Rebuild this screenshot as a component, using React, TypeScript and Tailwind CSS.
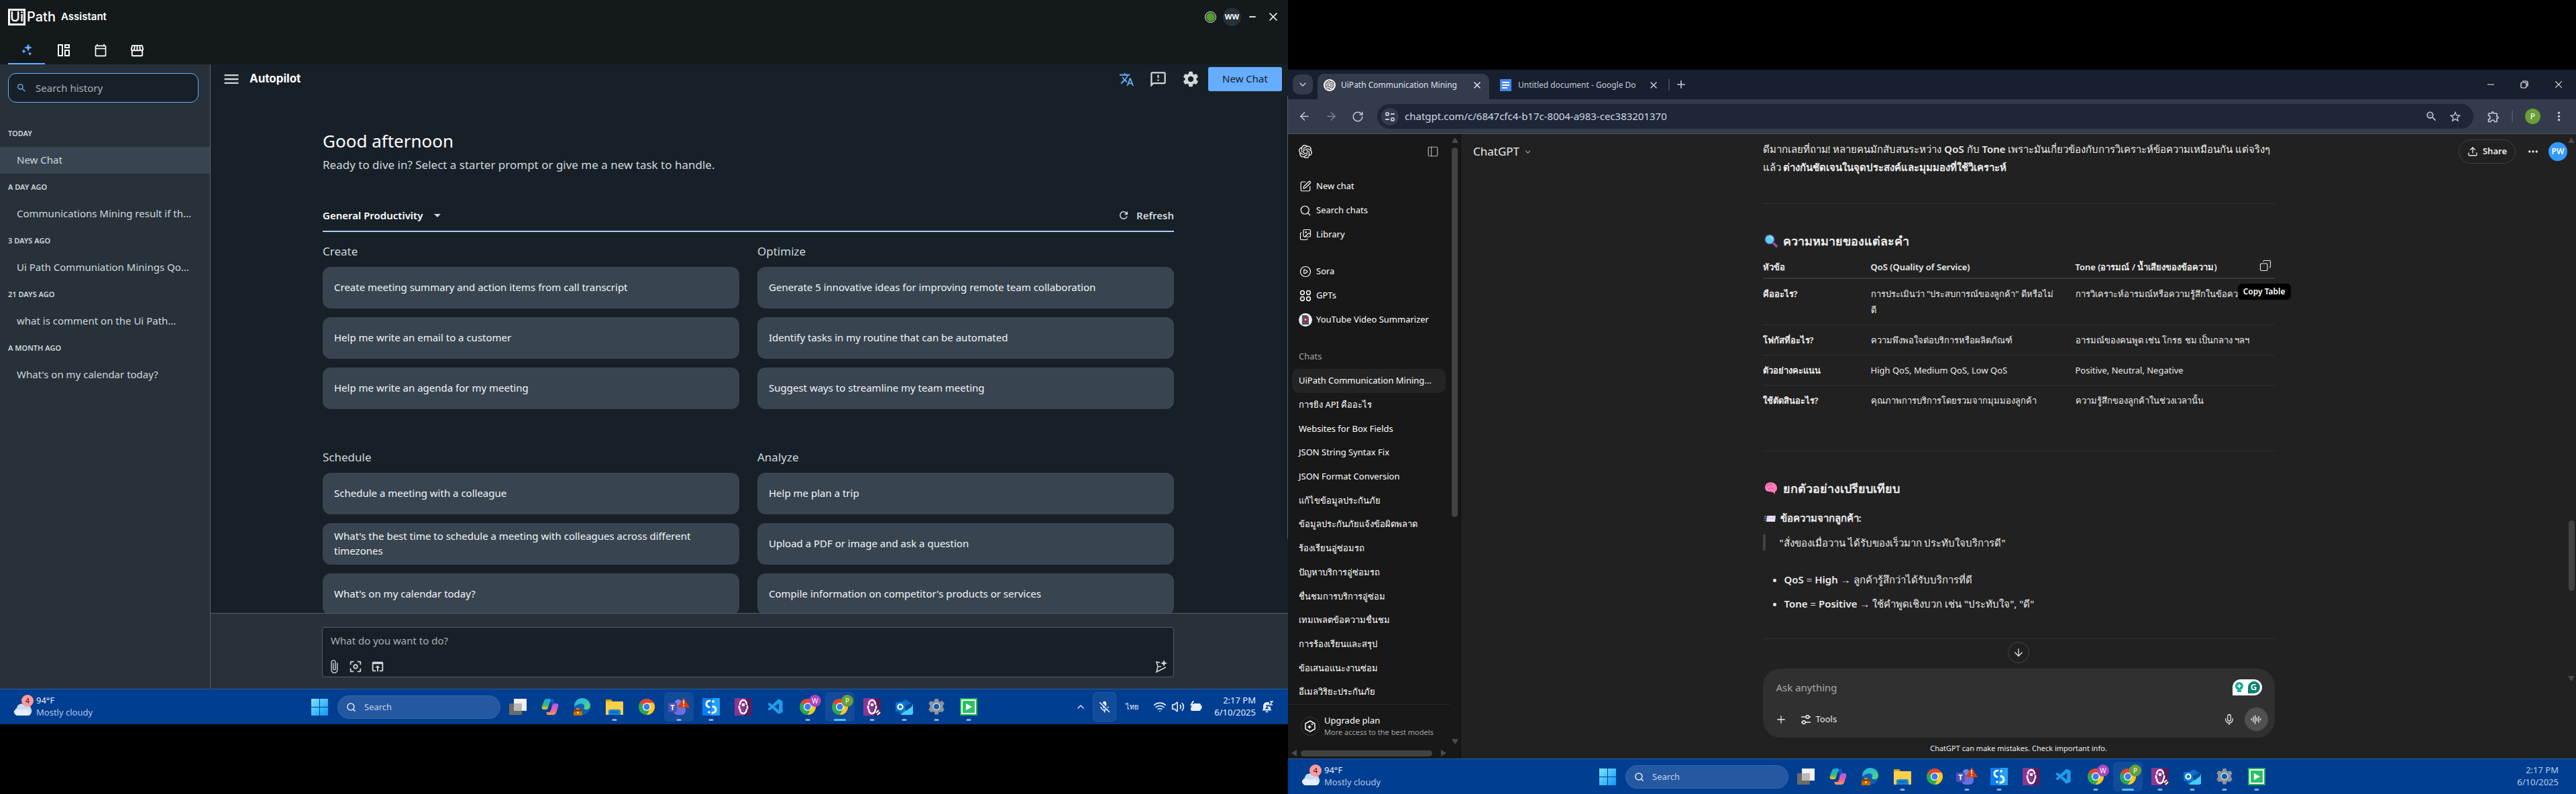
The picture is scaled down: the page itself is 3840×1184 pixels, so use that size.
import React from "react";
import {
  MdMenu, MdTranslate, MdOutlineFeedback, MdSettings, MdRefresh, MdSearch, MdAttachFile, MdMicOff,
  MdCenterFocusWeak, MdOpenInBrowser, MdOutlineCalendarToday, MdOutlineStorefront,
  MdArrowDropDown, MdStarBorder, MdOutlineExtension, MdMoreVert, MdZoomOut,
} from "react-icons/md";
import { SiOpenai } from "react-icons/si";
import { VscVscode } from "react-icons/vsc";
import {
  ArrowDown, ArrowLeft, ArrowRight, ChevronDown, ChevronUp, RotateCw, X, Plus, Minus, Mic,
  Search, SquarePen, Images, CirclePlay, PanelLeft, Ellipsis, Copy, Upload, Wifi, Volume2,
  AudioLines,
} from "lucide-react";

type Kids = { children?: React.ReactNode };

/* ---------- Shared drawings ---------- */

function Sparkles() {
  return (
    <svg viewBox="0 0 20 20" className="size-5" fill="currentColor" aria-hidden="true">
      <path d="M12 1l1.600 4.200L18 7l-4.400 1.800L12 13l-1.600-4.200L6 7l4.400-1.800z" />
      <path d="M5.500 9l1.100 2.400L9 12.500l-2.400 1.100L5.500 16l-1.100-2.400L2 12.500l2.400-1.100z" />
      <path d="M14.500 13l.9 2.100 2.100.9-2.100.9-.9 2.100-.9-2.100-2.100-.9 2.100-.9z" />
    </svg>
  );
}

function BoardIcon() {
  return (
    <svg viewBox="0 0 20 20" className="size-5" fill="none" stroke="currentColor" strokeWidth="2" aria-hidden="true">
      <path d="M2 2h6v16H2zM12 2h6v4h-6zM12 10h6v8h-6z" />
    </svg>
  );
}

function SendSpark() {
  return (
    <svg viewBox="0 0 20 20" className="size-5" fill="none" stroke="currentColor" strokeWidth="1.6" aria-hidden="true">
      <path d="M8 4L3 3l2 7-2 8 14-7M5 10h5" />
      <path d="M14 0l1.400 3.600L19 5l-3.600 1.400L14 10l-1.400-3.600L9 5l3.600-1.400z" fill="currentColor" stroke="none" />
    </svg>
  );
}

function BatteryIcon() {
  return (
    <svg viewBox="0 0 20 18" className="h-[18px] w-5" fill="currentColor" aria-hidden="true">
      <path d="M7 4h8a2 2 0 0 1 2 2v1h1.500v5H17v1a2 2 0 0 1-2 2H4a2 2 0 0 1-2-2v-2z" />
      <path d="M5 0L1 7h2.500L2 11l5-6H4.500L7 1z" />
    </svg>
  );
}

function BellIcon() {
  return (
    <svg viewBox="0 0 17 18" className="h-[18px] w-[17px]" fill="currentColor" aria-hidden="true">
      <path d="M8 2c-4 0-6 3-6 6v4l-1.500 2.500h14L13 12V9h-2V2.600C10 2 9 2 8 2zM5.500 15.500h4a2 2 0 0 1-4 0z" />
      <path d="M12 1h4l-4 5h4" fill="none" stroke="currentColor" strokeWidth="1.400" />
      <path d="M6 7h4l-4 4.500h4" fill="none" stroke="#003e92" strokeWidth="1.400" />
    </svg>
  );
}

function Chrome() {
  return (
    <svg viewBox="0 0 26 26" className="size-[26px]" aria-hidden="true">
      <circle cx="13" cy="13" r="12" fill="#2da84f" />
      <path d="M13 13L2.600 7A12 12 0 0 1 23.400 7z" fill="#e8432f" />
      <path d="M13 7h10.400A12 12 0 0 1 13 25l5.200-9z" fill="#fdc81f" />
      <circle cx="13" cy="13" r="6" fill="#fff" />
      <circle cx="13" cy="13" r="4.700" fill="#3b7ded" />
    </svg>
  );
}

function TaskView() {
  return (
    <svg viewBox="0 0 26 26" className="size-[26px]" aria-hidden="true">
      <rect x="7" y="1" width="19" height="18" fill="#f2f2f2" />
      <rect x="0" y="8" width="19" height="17" fill="#6b6b6b" />
      <rect x="7" y="8" width="12" height="11" fill="#b9b9b9" />
    </svg>
  );
}

function Copilot() {
  return (
    <svg viewBox="0 0 26 26" className="size-[26px]" aria-hidden="true">
      <defs>
        <linearGradient id="cpA" x1="0" y1="0" x2="0" y2="1">
          <stop offset="0" stopColor="#12a8f0" /><stop offset=".6" stopColor="#3fb86a" /><stop offset="1" stopColor="#f6c82a" />
        </linearGradient>
        <linearGradient id="cpB" x1="0" y1="0" x2="0" y2="1">
          <stop offset="0" stopColor="#a15cf5" /><stop offset=".6" stopColor="#f0609a" /><stop offset="1" stopColor="#fb9a55" />
        </linearGradient>
      </defs>
      <path d="M8 1h8c2 0 2 2 3 4h-4c-2 0-3 2-4 6s-2 6-4 6H4c-3 0-4-2-3-5l3-8c1-2 2-3 4-3z" fill="url(#cpA)" />
      <path d="M18 25h-8c-2 0-2-2-3-4h4c2 0 3-2 4-6s2-7 4-7h3c3 0 4 2 3 5l-3 9c-1 2-2 3-4 3z" fill="url(#cpB)" />
      <path d="M13 1h3c2 0 2 2 3 4l1 3c-3 0-4 1-5 4l-1 2 1-8z" fill="#2048c8" />
    </svg>
  );
}

function Edge() {
  return (
    <svg viewBox="0 0 26 26" className="size-[26px]" aria-hidden="true">
      <defs>
        <linearGradient id="edG" x1="0" y1="0" x2="1" y2="1">
          <stop offset="0" stopColor="#2aa7ea" /><stop offset=".6" stopColor="#35c8b8" /><stop offset="1" stopColor="#6be052" />
        </linearGradient>
      </defs>
      <circle cx="13" cy="13" r="12" fill="#0f5fb4" />
      <path d="M1 13A12 12 0 0 1 25 11c0 4-3 6-6 6-3 0-5-1-3-4 1-4-4-6-8-4-3 1-6 2-7 4z" fill="url(#edG)" />
      <rect x="0" y="17" width="13" height="9" fill="#c56b00" />
      <rect x="0" y="17" width="13" height="3" fill="#8a4300" />
      <rect x="4" y="15" width="5" height="2" fill="#e08a1a" />
      <rect x="5" y="20" width="3" height="3" fill="#ffd23f" />
    </svg>
  );
}

function Folder() {
  return (
    <svg viewBox="0 0 26 26" className="size-[26px]" aria-hidden="true">
      <path d="M0 2h8l2 3h-3v3H0z" fill="#e0a000" />
      <rect x="0" y="5" width="26" height="20" rx="1" fill="#ffcf48" />
      <path d="M4 25v-5c0-2 1-3 3-3h12c2 0 3 1 3 3v5z" fill="#1583d6" />
      <rect x="8" y="20" width="10" height="2" fill="#0a62ad" />
    </svg>
  );
}

function Teams() {
  return (
    <svg viewBox="0 0 32 28" className="h-7 w-8" aria-hidden="true">
      <circle cx="15" cy="8" r="5" fill="#7b83eb" />
      <rect x="8" y="11" width="18" height="15" rx="6" fill="#6a6fdc" />
      <rect x="0" y="8" width="13" height="14" rx="1" fill="#4a51b8" />
      <text x="6.500" y="19" textAnchor="middle" fontSize="11" fontWeight="700" fill="#fff" fontFamily="Noto Sans, sans-serif">T</text>
      <path d="M23 0l9 15H14z" fill="#dc3c0c" />
      <path d="M23 4v6M23 11.500v2" stroke="#fff" strokeWidth="1.600" />
    </svg>
  );
}

function BlueS() {
  return (
    <svg viewBox="0 0 26 26" className="size-[26px]" aria-hidden="true">
      <rect width="26" height="26" fill="#0a7df0" />
      <path d="M15 0h11v26H12z" fill="#25a0f8" />
      <path d="M11 4c-3 0-5 2-5 4.500S8 13 10 13.500M15 22c3 0 5-2 5-4.500s-2-4.500-4-5" fill="none" stroke="#fff" strokeWidth="3" strokeLinecap="round" />
      <circle cx="16" cy="5" r="1.800" fill="#fff" /><circle cx="10" cy="21" r="1.800" fill="#fff" />
    </svg>
  );
}

function PurpleBot({ link = false }: { link?: boolean }) {
  return (
    <svg viewBox="0 0 26 26" className="size-[26px]" aria-hidden="true">
      <rect width="26" height="26" fill="#8e3590" />
      <path d="M17 0h9v26H15z" fill="#54205e" />
      <path d="M8 10c0-4 2-7 5-7s5 3 5 7M8 16c0 4 2 7 5 7s5-3 5-7M7 11v5M19 11v5" fill="none" stroke="#fff" strokeWidth="2.600" />
      <rect x="11" y="8" width="4" height="4" fill="#fff" />
      {link && <path d="M19 22l4-4M21 25l4-4" stroke="#fff" strokeWidth="2" />}
    </svg>
  );
}

function Outlook() {
  return (
    <svg viewBox="0 0 26 26" className="size-[26px]" aria-hidden="true">
      <path d="M4 9L15 2l11 7v15H6z" fill="#1368c4" />
      <path d="M8 24L26 10v12c0 2-1 3-3 3H9z" fill="#45cdf6" />
      <path d="M14 12l11-5v5l-9 7z" fill="#0a4a9c" />
      <rect x="0" y="6" width="14" height="14" rx="2" fill="#0c78d4" />
      <circle cx="7" cy="13" r="3.600" fill="none" stroke="#fff" strokeWidth="2.200" />
    </svg>
  );
}

function GearApp() {
  return (
    <svg viewBox="0 0 26 26" className="size-[26px]" aria-hidden="true">
      <path d="M10.500 1h5l.8 3.400 2 1 3.200-1.500 3.300 4-2 2.900v3.400l2 2.800-3.300 4.200-3.200-1.300-2 1-.8 3.600h-5l-.8-3.600-2-1-3.200 1.300L1.200 17l2-2.800v-3.400l-2-2.900 3.300-4 3.200 1.500 2-1z" fill="#8d949b" />
      <circle cx="13" cy="12.800" r="6" fill="#1d5c9e" />
      <circle cx="13" cy="12.800" r="5" fill="none" stroke="#e4eef6" strokeWidth="1.400" />
    </svg>
  );
}

function GreenPlay() {
  return (
    <svg viewBox="0 0 26 26" className="size-[26px]" aria-hidden="true">
      <rect width="26" height="26" fill="#1fb554" />
      <rect x="3" y="3" width="20" height="20" fill="#2bc263" stroke="#fff" strokeWidth="2" />
      <path d="M9 8l9 5-9 5z" fill="#fff" />
    </svg>
  );
}

function WinLogo() {
  return (
    <svg viewBox="0 0 25 25" className="size-[25px]" aria-hidden="true">
      <defs>
        <linearGradient id="wl" x1="0" y1="0" x2="1" y2="1">
          <stop offset="0" stopColor="#7fe6fd" /><stop offset="1" stopColor="#0e96f5" />
        </linearGradient>
      </defs>
      <path d="M0 0h12v12H0zM13 0h12v12H13zM0 13h12v12H0zM13 13h12v12H13z" fill="url(#wl)" />
    </svg>
  );
}

function Weather() {
  return (
    <svg viewBox="0 0 32 34" className="h-[34px] w-8" aria-hidden="true">
      <circle cx="20" cy="19" r="6" fill="#f08a24" />
      <path d="M6 31a6 6 0 0 1-1-11 7 7 0 0 1 13-3 6 6 0 0 1 4 14z" fill="#c6dcf8" />
      <path d="M6 31a6 6 0 0 1-5-7 8 5 0 0 1 12-1c4-2 11-1 13 3a5 5 0 0 1-4 5z" fill="#e6effb" />
      <circle cx="21" cy="9" r="9" fill="#ff9a9f" />
      <text x="21" y="13" textAnchor="middle" fontSize="11" fill="#2b1515" fontFamily="Noto Sans, sans-serif">4</text>
    </svg>
  );
}

/* ---------- Taskbar ---------- */

function AppSlot({ children, dot, active, name, badge, badgeClass }: Kids & {
  dot?: boolean; active?: boolean; name: string; badge?: string; badgeClass?: string;
}) {
  return (
    <button aria-label={name} className="relative flex h-11 w-12 items-center justify-center">
      {active && <span className="absolute inset-x-[2px] inset-y-0 rounded-md bg-[#124b9a]" />}
      <span className="relative">{children}</span>
      {badge && (
        <span className={`absolute top-1 right-1 flex size-[18px] items-center justify-center rounded-full text-[10px] text-white ${badgeClass}`}>{badge}</span>
      )}
      {dot && <span className={`absolute bottom-[1px] left-1/2 h-[3px] -translate-x-1/2 rounded-full ${active && badge ? "w-[18px] bg-[#4cc2ff]" : "w-[7px] bg-[#8fabd6]"}`} />}
    </button>
  );
}

function Taskbar({ primary }: { primary?: boolean }) {
  return (
    <footer className={`grid h-[53px] shrink-0 grid-cols-[1fr_auto_1fr] items-center border-t border-[#2b5c97] bg-[#003e92] text-[13px] leading-[18px] ${primary ? "text-[#e8eff8]" : "text-[#bccde6]"}`}>
      <div className="flex items-center gap-[2px] pb-[2px] pl-5">
        <Weather />
        <div>
          <p className="text-[#eef3fa]">94°F</p>
          <p className="text-[#b4c6e2]">Mostly cloudy</p>
        </div>
      </div>
      <div className="flex items-center">
        <button aria-label="Start" className="flex h-11 w-12 items-center justify-center"><WinLogo /></button>
        <label className="mr-[2px] ml-[3px] flex h-[35px] w-[243px] items-center gap-3 rounded-full border border-[#3767ab] bg-[#2458a0] pl-3">
          <Search className="size-[17px] text-[#dfe8f4]" strokeWidth={2.4} />
          <input placeholder="Search" aria-label="Search Windows" className="w-full bg-transparent text-[13px] outline-none placeholder:text-[#c3d2ea]" />
        </label>
        <AppSlot name="Task View"><TaskView /></AppSlot>
        <AppSlot name="Copilot"><Copilot /></AppSlot>
        <AppSlot name="Edge"><Edge /></AppSlot>
        <AppSlot name="File Explorer" dot><Folder /></AppSlot>
        <AppSlot name="Chrome"><Chrome /></AppSlot>
        <AppSlot name="Teams" dot active={primary}><Teams /></AppSlot>
        <AppSlot name="Assistant" dot><BlueS /></AppSlot>
        <AppSlot name="Orchestrator"><PurpleBot /></AppSlot>
        <AppSlot name="Visual Studio Code"><VscVscode className="size-[27px] text-[#1f9cea]" /></AppSlot>
        <AppSlot name="Chrome, profile W" dot badge="W" badgeClass="bg-[#ab47bc]"><Chrome /></AppSlot>
        <AppSlot name="Chrome, profile P" dot active badge="P" badgeClass="bg-[#689f38]"><Chrome /></AppSlot>
        <AppSlot name="Studio" dot><PurpleBot link /></AppSlot>
        <AppSlot name="Outlook" dot><Outlook /></AppSlot>
        <AppSlot name="Settings" dot><GearApp /></AppSlot>
        <AppSlot name="Recorder" dot><GreenPlay /></AppSlot>
      </div>
      {primary ? (
        <div className="flex items-center justify-end pr-[22px]">
          <ChevronUp className="mr-[10px] size-4" />
          <span className="mr-[14px] flex h-11 w-[35px] items-center justify-center rounded-md border border-[#2458a0] bg-[#124b9a]"><MdMicOff className="size-[21px]" /></span>
          <span className="mr-[21px] w-5 text-[11px]">ไทย</span>
          <Wifi className="mr-[7px] size-5" />
          <Volume2 className="mr-[7px] size-5" />
          <span className="mr-[17px]"><BatteryIcon /></span>
          <div className="pb-[2px] text-right"><p>2:17 PM</p><p>6/10/2025</p></div>
          <span className="ml-[9px]"><BellIcon /></span>
        </div>
      ) : (
        <div className="pr-[26px] pb-[2px] text-right"><p>2:17 PM</p><p>6/10/2025</p></div>
      )}
    </footer>
  );
}

/* ---------- UiPath Assistant ---------- */

const history: [string, string][] = [
  ["TODAY", "New Chat"],
  ["A DAY AGO", "Communications Mining result if th..."],
  ["3 DAYS AGO", "Ui Path Communiation Minings Qo..."],
  ["21 DAYS AGO", "what is comment on the Ui Path..."],
  ["A MONTH AGO", "What's on my calendar today?"],
];

const prompts: [string, string[]][] = [
  ["Create", ["Create meeting summary and action items from call transcript", "Help me write an email to a customer", "Help me write an agenda for my meeting"]],
  ["Optimize", ["Generate 5 innovative ideas for improving remote team collaboration", "Identify tasks in my routine that can be automated", "Suggest ways to streamline my team meeting"]],
  ["Schedule", ["Schedule a meeting with a colleague", "What's the best time to schedule a meeting with colleagues across different timezones", "What's on my calendar today?"]],
  ["Analyze", ["Help me plan a trip", "Upload a PDF or image and ask a question", "Compile information on competitor's products or services"]],
];

function Assistant() {
  return (
    <section className="mb-26 flex min-w-0 flex-1 flex-col overflow-hidden bg-[#182027] text-[15px] text-[#cfd8dd]">
      <header className="flex h-24 shrink-0 flex-col justify-between bg-[#14191c] text-white">
        <div className="flex h-[50px] items-center pr-3 pl-3 font-['Inter']">
          <span className="flex items-center text-[20px] leading-none">
            <span className="flex h-[25px] w-[26px] items-center justify-center border-[3px] border-white font-medium">Ui</span>
            <span className="ml-[2px] font-medium">Path</span>
          </span>
          <span className="ml-2 text-[15px] font-semibold">Assistant</span>
          <span className="ml-auto flex items-center">
            <span className="mr-[10px] flex size-[17px] items-center justify-center rounded-full border border-white"><span className="size-[13px] rounded-full bg-[#4f9e2c]" /></span>
            <span className="mr-[10px] flex size-[27px] items-center justify-center rounded-full bg-[#273139] font-['Noto_Sans'] text-[11px] font-bold">WW</span>
            <button aria-label="Minimize" className="mr-[14px]"><Minus className="size-[14px]" strokeWidth={3} /></button>
            <button aria-label="Close"><X className="size-5" /></button>
          </span>
        </div>
        <nav className="flex h-[42px] pl-3">
          <button aria-label="Autopilot" className="flex w-[55px] items-center justify-center border-b-2 border-[#66adff] text-[#66adff]"><Sparkles /></button>
          <button aria-label="Home" className="flex w-[55px] items-center justify-center"><BoardIcon /></button>
          <button aria-label="Calendar" className="flex w-[55px] items-center justify-center"><MdOutlineCalendarToday className="size-5" /></button>
          <button aria-label="Marketplace" className="flex w-[55px] items-center justify-center"><MdOutlineStorefront className="size-[23px]" /></button>
        </nav>
      </header>

      <div className="flex min-h-0 flex-1">
        <aside className="w-[314px] shrink-0 border-r border-[#526069] bg-[#273139]">
          <label className="mt-[13px] mr-[17px] ml-3 flex h-11 items-center gap-[13px] rounded-xl border border-[#66adff] bg-[#182027] pl-[11px]">
            <MdSearch className="size-[18px] text-[#66adff]" />
            <input placeholder="Search history" aria-label="Search history" className="w-full bg-transparent outline-none placeholder:text-[#a4b1b8]" />
          </label>
          <ul className="mt-[26px]">
            {history.map(([when, title], i) => (
              <li key={when}>
                <h3 className="flex h-10 items-center pl-3 text-[11px] font-semibold">{when}</h3>
                <a href="#chat" className={`flex h-10 items-center pb-[2px] pl-[25px] whitespace-nowrap ${i === 0 ? "bg-[#384551]" : ""}`}>{title}</a>
              </li>
            ))}
          </ul>
        </aside>

        <main className="relative flex min-w-0 flex-1 flex-col">
          <div className="flex h-11 shrink-0 items-center pr-[9px] pl-[17px]">
            <button aria-label="Menu"><MdMenu className="size-7 text-[#cfd8dd]" /></button>
            <h1 className="ml-[13px] font-['Inter'] text-[17px] font-bold text-white">Autopilot</h1>
            <div className="ml-auto flex items-center">
              <button aria-label="Translate" className="mr-[22px]"><MdTranslate className="size-[23px] text-[#66adff]" /></button>
              <button aria-label="Feedback" className="mr-[21px]"><MdOutlineFeedback className="size-[27px]" /></button>
              <button aria-label="Settings" className="mr-3"><MdSettings className="size-7" /></button>
              <button className="h-9 w-[110px] rounded-[3px] bg-[#66adff] pb-[2px] text-[15px] text-[#182027]">New Chat</button>
            </div>
          </div>

          <div className="min-h-0 flex-1 overflow-hidden pr-[170px] pl-[167px]">
            <h2 className="mt-[52px] text-[26px] leading-9 text-white">Good afternoon</h2>
            <p className="mt-1 text-[17px] leading-7">Ready to dive in? Select a starter prompt or give me a new task to handle.</p>
            <div className="mt-10 flex h-[46px] items-center justify-between border-b-2 border-[#a9d0fb] pb-[2px]">
              <button className="flex items-center gap-[10px] font-semibold text-white">General Productivity <MdArrowDropDown className="size-6 text-[#cfd8dd]" /></button>
              <button className="flex items-center gap-[10px] font-semibold"><MdRefresh className="size-[18px]" />Refresh</button>
            </div>
            <div className="mt-[15px] grid grid-cols-2 gap-x-[27px] gap-y-[58px]">
              {prompts.map(([group, items]) => (
                <section key={group}>
                  <h3 className="text-[17px] leading-7">{group}</h3>
                  <div className="mt-[9px] flex flex-col gap-[13px]">
                    {items.map((t) => (
                      <button key={t} className="h-[62px] rounded-xl bg-[#384551] px-[17px] pb-[2px] text-left text-[15px] leading-[22px] text-[#f4f6f7]">{t}</button>
                    ))}
                  </div>
                </section>
              ))}
            </div>
          </div>

          <div className="shrink-0 border-t border-[#526069] bg-[#273139] pt-5 pr-[170px] pb-[17px] pl-[166px]">
            <div className="flex h-[75px] flex-col justify-between rounded border border-[#526069] bg-[#182027] px-[6px] pt-2 pb-1">
              <input placeholder="What do you want to do?" aria-label="Prompt" className="bg-transparent pl-[6px] outline-none placeholder:text-[#a4b1b8]" />
              <div className="flex items-center">
                <button aria-label="Attach" className="mr-[10px]"><MdAttachFile className="size-[22px]" /></button>
                <button aria-label="Capture" className="mr-[11px]"><MdCenterFocusWeak className="size-[22px]" /></button>
                <button aria-label="Open"><MdOpenInBrowser className="size-[22px]" /></button>
                <button aria-label="Send" className="mr-[2px] ml-auto"><SendSpark /></button>
              </div>
            </div>
          </div>
          <span className="absolute top-[47px] right-0 h-[71%] w-px bg-[#526069]" />
        </main>
      </div>
      <Taskbar primary />
    </section>
  );
}

/* ---------- Browser with ChatGPT ---------- */

function Tri({ dir }: { dir: "up" | "down" | "left" | "right" }) {
  const d = { up: "M5 1l5 8H0z", down: "M5 9L0 1h10z", left: "M1 5l8-5v10z", right: "M9 5L1 0v10z" }[dir];
  return <svg viewBox="0 0 10 10" className="size-[10px] shrink-0 text-[#4b4b4b]" fill="currentColor" aria-hidden="true"><path d={d} /></svg>;
}

function GptsIcon() {
  return (
    <svg viewBox="0 0 18 18" className="size-[18px]" fill="none" stroke="currentColor" strokeWidth="1.500" aria-hidden="true">
      <circle cx="4.500" cy="4.500" r="2.900" /><circle cx="13.500" cy="4.500" r="2.900" /><circle cx="4.500" cy="13.500" r="2.900" /><circle cx="13.500" cy="13.500" r="2.900" />
    </svg>
  );
}

function SummarizerIcon() {
  return (
    <svg viewBox="0 0 20 20" className="size-5" aria-hidden="true">
      <circle cx="10" cy="10" r="10" fill="#e9edf0" />
      <path d="M5 3h7l3 3v11H5z" fill="#4a5560" />
      <rect x="7" y="7" width="6" height="5" fill="#c0262e" />
      <path d="M9 8l3 1.500L9 11z" fill="#fff" />
    </svg>
  );
}

function PlanIcon() {
  return (
    <svg viewBox="0 0 28 28" className="size-7 shrink-0" fill="none" stroke="#fff" aria-hidden="true">
      <circle cx="14" cy="14" r="13.500" stroke="#3a3a3a" />
      <path d="M14 6l7 4v8l-7 4-7-4v-8z" strokeWidth="1.500" strokeLinejoin="round" />
      <path d="M13 11.500l1 2.500 2.500 1-2.500 1-1 2.500-1-2.500-2.500-1 2.500-1zM17 9l.6 1.400L19 11l-1.400.6L17 13l-.6-1.400L15 11l1.400-.6z" fill="#fff" stroke="none" />
    </svg>
  );
}

function SliderIcon() {
  return (
    <svg viewBox="0 0 16 16" className="size-4" fill="none" stroke="currentColor" strokeWidth="1.600" aria-hidden="true">
      <path d="M1 4h7M13 4h2M1 12h1M8 12h7" /><circle cx="10.500" cy="4" r="2.300" /><circle cx="5" cy="12" r="2.300" />
    </svg>
  );
}

function SiteIcon() {
  return (
    <svg viewBox="0 0 16 16" className="size-4" fill="none" stroke="currentColor" strokeWidth="1.800" aria-hidden="true">
      <path d="M9 4h6M1 12h6" /><circle cx="4" cy="4" r="2.200" /><circle cx="12" cy="12" r="2.200" />
    </svg>
  );
}

function DocsIcon() {
  return (
    <svg viewBox="0 0 17 18" className="h-[18px] w-[17px] shrink-0" aria-hidden="true">
      <rect width="17" height="18" rx="1" fill="#4285f4" />
      <path d="M3 5h11M3 9h11M3 13h8" stroke="#fff" strokeWidth="2" />
    </svg>
  );
}

function RestoreIcon() {
  return (
    <svg viewBox="0 0 12 12" className="size-3" fill="none" stroke="currentColor" strokeWidth="1.200" aria-hidden="true">
      <rect x="1" y="3" width="8" height="8" rx="1.500" /><path d="M3 1h6a2 2 0 0 1 2 2v6" />
    </svg>
  );
}

function LensEmoji() {
  return (
    <svg viewBox="0 0 20 20" className="size-5" aria-hidden="true">
      <path d="M13 13l5 5" stroke="#8b4a8c" strokeWidth="4" strokeLinecap="round" />
      <circle cx="8" cy="8" r="7" fill="#62cdf2" stroke="#4b4f8c" strokeWidth="1.400" />
      <path d="M8 4a4 4 0 0 1 4 4" stroke="#bdeeff" strokeWidth="1.400" fill="none" />
    </svg>
  );
}

function BrainEmoji() {
  return (
    <svg viewBox="0 0 20 20" className="size-5" aria-hidden="true">
      <path d="M2 5c3-5 13-5 16 1 2 4 1 8-2 9v4l-3-3c-3 0-4-1-6-1-6 0-7-6-5-10z" fill="#ff7fb8" />
      <path d="M3 8c2-4 6-5 9-3M6 12c2-3 5-3 8-1" stroke="#ee4fa0" strokeWidth="1.400" fill="none" />
    </svg>
  );
}

function MailEmoji() {
  return (
    <svg viewBox="0 0 18 14" className="h-[14px] w-[18px]" aria-hidden="true">
      <path d="M4 4h13l-1 9H3z" fill="#e6dcf4" /><path d="M4 4l6 5 7-5" fill="none" stroke="#c9bade" />
      <path d="M0 5h3M0 8h3M0 11h2" stroke="#4a90c8" strokeWidth="1.500" />
    </svg>
  );
}

const chats = [
  "UiPath Communication Mining...", "การยิง API คืออะไร", "Websites for Box Fields", "JSON String Syntax Fix", "JSON Format Conversion",
  "แก้ไขข้อมูลประกันภัย", "ข้อมูลประกันภัยแจ้งข้อผิดพลาด", "ร้องเรียนอู่ซ่อมรถ", "ปัญหาบริการอู่ซ่อมรถ", "ชื่นชมการบริการอู่ซ่อม",
  "เทมเพลตข้อความชื่นชม", "การร้องเรียนและสรุป", "ข้อเสนอแนะงานซ่อม", "อีเมลวิริยะประกันภัย",
];

const rows: [string, string, string][] = [
  ["คืออะไร?", "การประเมินว่า \"ประสบการณ์ของลูกค้า\" ดีหรือไม่\nดี", "การวิเคราะห์อารมณ์หรือความรู้สึกในข้อความ"],
  ["โฟกัสที่อะไร?", "ความพึงพอใจต่อบริการหรือผลิตภัณฑ์", "อารมณ์ของคนพูด เช่น โกรธ ชม เป็นกลาง ฯลฯ"],
  ["ตัวอย่างคะแนน", "High QoS, Medium QoS, Low QoS", "Positive, Neutral, Negative"],
  ["ใช้ตัดสินอะไร?", "คุณภาพการบริการโดยรวมจากมุมมองลูกค้า", "ความรู้สึกของลูกค้าในช่วงเวลานั้น"],
];

function NavRow({ icon, children }: Kids & { icon: React.ReactNode }) {
  return (
    <a href="#nav" className="flex h-9 items-center gap-[6px] pl-4 whitespace-nowrap">
      <span className="flex w-5 justify-center">{icon}</span>{children}
    </a>
  );
}

function ChatSidebar() {
  return (
    <aside className="flex w-[258px] shrink-0 border-r border-[#0f0f0f] bg-[#181818] text-[13px] text-white">
      <div className="flex min-w-0 flex-1 flex-col">
        <div className="flex h-[52px] shrink-0 items-center justify-between pr-4 pl-4">
          <SiOpenai className="size-5" />
          <button aria-label="Close sidebar"><PanelLeft className="size-[18px] text-[#b4b4b4]" strokeWidth={1.6} /></button>
        </div>
        <nav className="mt-2 shrink-0">
          <NavRow icon={<SquarePen className="size-[18px]" strokeWidth={1.6} />}>New chat</NavRow>
          <NavRow icon={<Search className="size-[18px]" strokeWidth={1.6} />}>Search chats</NavRow>
          <NavRow icon={<Images className="size-[18px]" strokeWidth={1.6} />}>Library</NavRow>
        </nav>
        <nav className="mt-[19px] shrink-0">
          <NavRow icon={<CirclePlay className="size-[18px]" strokeWidth={1.6} />}>Sora</NavRow>
          <NavRow icon={<GptsIcon />}>GPTs</NavRow>
          <NavRow icon={<SummarizerIcon />}>YouTube Video Summarizer</NavRow>
        </nav>
        <h2 className="mt-[19px] flex h-9 shrink-0 items-center pl-4 text-[#a3a3a3]">Chats</h2>
        <ul className="flex min-h-0 flex-1 flex-col">
          {chats.map((c, i) => (
            <li key={c} className="flex min-h-0 flex-1">
              <a href="#chat" className={`ml-[6px] flex flex-1 items-center rounded-[10px] pl-[10px] whitespace-nowrap ${i === 0 ? "mr-[6px] bg-[#242424]" : ""}`}>{c}</a>
            </li>
          ))}
        </ul>
        <div className="flex h-[65px] shrink-0 items-center gap-[7px] border-t border-[#2a2a2a] pl-[19px]">
          <PlanIcon />
          <div>
            <p className="leading-[18px]">Upgrade plan</p>
            <p className="text-[11px] leading-[18px] whitespace-nowrap text-[#a3a3a3]">More access to the best models</p>
          </div>
        </div>
        <div className="flex h-4 shrink-0 items-center gap-[5px] pr-[4px] pl-[4px]">
          <Tri dir="left" />
          <span className="h-[9px] flex-1 rounded-full bg-[#424242]" />
          <span className="w-[2px]" />
          <Tri dir="right" />
        </div>
      </div>
      <div className="flex w-4 flex-col items-center gap-[6px] pt-1 pr-[1px] pb-5">
        <Tri dir="up" />
        <span className="w-[9px] flex-[558] rounded-full bg-[#424242]" />
        <span className="flex-[322]" />
        <Tri dir="down" />
      </div>
    </aside>
  );
}

function Answer() {
  return (
    <article className="text-[15px] text-[#ececec]">
      <p className="pt-[9px] leading-[27px]">
        ดีมากเลยที่ถาม! หลายคนมักสับสนระหว่าง <b className="font-semibold">QoS</b> กับ <b className="font-semibold">Tone</b> เพราะมันเกี่ยวข้องกับการวิเคราะห์ข้อความเหมือนกัน แต่จริงๆ
        <br />แล้ว <b className="font-semibold">ต่างกันชัดเจนในจุดประสงค์และมุมมองที่ใช้วิเคราะห์</b>
      </p>
      <hr className="mt-[40px] border-[#303030]" />
      <h2 className="mt-[39px] flex items-center gap-2 pl-[2px] text-[18px] leading-8 font-semibold"><LensEmoji />ความหมายของแต่ละคำ</h2>
      <div className="relative mt-[7px]">
        <table className="w-full table-fixed text-left text-[13px] leading-6">
          <colgroup><col className="w-[161px]" /><col className="w-[305px]" /><col /></colgroup>
          <thead>
            <tr className="h-[33px] border-b-2 border-[#383838]">
              <th className="font-semibold">หัวข้อ</th>
              <th className="font-semibold">QoS (Quality of Service)</th>
              <th className="font-semibold">Tone (อารมณ์ / น้ำเสียงของข้อความ)</th>
            </tr>
          </thead>
          <tbody>
            {rows.map(([a, b, c], i) => (
              <tr key={a} className={i < 3 ? "border-b border-[#303030] align-top" : "align-top"}>
                <th className="py-[10px] font-semibold">{a}</th>
                <td className="py-[10px] pr-2 whitespace-pre-line">{b}</td>
                <td className="py-[10px] whitespace-nowrap">{c}</td>
              </tr>
            ))}
          </tbody>
        </table>
        <button aria-label="Copy table" className="absolute top-[5px] right-[5px]"><Copy className="size-[18px] -scale-x-100" strokeWidth={1.5} /></button>
        <span role="tooltip" className="absolute top-[41px] -right-6 rounded-md bg-black px-2 text-[12px] leading-6 font-semibold text-white">Copy Table</span>
      </div>
      <hr className="mt-[53px] border-[#303030]" />
      <h2 className="mt-[39px] flex items-center gap-2 pl-[2px] text-[18px] leading-8 font-semibold"><BrainEmoji />ยกตัวอย่างเปรียบเทียบ</h2>
      <p className="mt-[15px] flex items-center gap-[6px] pl-[2px] leading-[26px] font-semibold"><MailEmoji />ข้อความจากลูกค้า:</p>
      <blockquote className="mt-3 border-l-4 border-[#424242] pl-[21px] leading-6">"สั่งของเมื่อวาน ได้รับของเร็วมาก ประทับใจบริการดี"</blockquote>
      <ul className="mt-[30px] flex list-disc flex-col gap-[10px] pl-8 leading-[26px]">
        <li><b className="font-semibold">QoS</b> = <b className="font-semibold">High</b> → ลูกค้ารู้สึกว่าได้รับบริการที่ดี</li>
        <li><b className="font-semibold">Tone</b> = <b className="font-semibold">Positive</b> → ใช้คำพูดเชิงบวก เช่น "ประทับใจ", "ดี"</li>
      </ul>
      <hr className="mt-[39px] border-[#303030]" />
    </article>
  );
}

function Composer() {
  return (
    <div className="relative mx-auto w-full max-w-[763px]">
      <button aria-label="Scroll to bottom" className="absolute -top-10 left-1/2 flex size-8 -translate-x-1/2 items-center justify-center rounded-full border border-[#454545] bg-[#212121]"><ArrowDown className="size-[18px]" strokeWidth={1.7} /></button>
      <div className="flex h-[103px] flex-col justify-between rounded-[26px] bg-[#303030] pt-4 pr-[10px] pb-[10px] pl-5">
        <div className="flex items-center">
          <input placeholder="Ask anything" aria-label="Ask anything" className="min-w-0 flex-1 bg-transparent text-[15px] outline-none placeholder:text-[#a8a8a8]" />
          <span className="mr-[9px] flex h-6 w-11 items-center justify-around rounded-full rounded-bl-none bg-white">
            <svg viewBox="0 0 14 16" className="h-4 w-[14px]" aria-hidden="true"><circle cx="7" cy="6" r="6" fill="#0fae8c" /><path d="M7 3v6M4 6h6" stroke="#fff" strokeWidth="1.600" /><path d="M4 12h6v3H4z" fill="#0fae8c" /></svg>
            <span className="flex size-[18px] items-center justify-center rounded-full rounded-bl-none bg-[#0b7f6d] text-[13px] font-semibold text-white">G</span>
          </span>
        </div>
        <div className="flex items-center text-[13px]">
          <button aria-label="Add" className="-ml-[2px]"><Plus className="size-[18px]" strokeWidth={1.7} /></button>
          <button className="ml-[20px] flex items-center gap-[7px]"><SliderIcon />Tools</button>
          <button aria-label="Dictate" className="mr-[14px] ml-auto"><Mic className="size-[18px]" strokeWidth={1.7} /></button>
          <button aria-label="Voice" className="flex size-[35px] items-center justify-center rounded-full bg-[#505050]"><AudioLines className="size-4" strokeWidth={2} /></button>
        </div>
      </div>
      <p className="text-center text-[11px] leading-[31px]">ChatGPT can make mistakes. Check important info.</p>
    </div>
  );
}

function Browser() {
  return (
    <section className="mt-26 flex min-w-0 flex-1 flex-col overflow-hidden bg-[#212121] text-[#ececec]">
      <div className="flex h-11 shrink-0 items-end bg-[#18202f] pl-[7px] text-[12px] text-[#c3cbdb]">
        <button aria-label="Search tabs" className="mb-[7px] flex size-[30px] items-center justify-center rounded-[10px] bg-[#333b4c]"><ChevronDown className="size-4" strokeWidth={2.4} /></button>
        <div className="ml-[7px] flex h-[38px] w-64 items-center rounded-t-[10px] bg-[#333b4c] pr-[10px] pb-1 pl-[9px] text-[#dfe4ee]">
          <span className="flex size-[18px] items-center justify-center rounded-full bg-white"><SiOpenai className="size-[14px] text-[#333]" /></span>
          <span className="ml-2 flex-1 whitespace-nowrap">UiPath Communication Mining</span>
          <button aria-label="Close tab"><X className="size-4" strokeWidth={2.4} /></button>
        </div>
        <div className="ml-4 flex h-[38px] w-[237px] items-center pb-1">
          <DocsIcon />
          <span className="ml-[10px] flex-1 whitespace-nowrap">Untitled document - Google Do</span>
          <button aria-label="Close tab"><X className="size-4" strokeWidth={2.4} /></button>
        </div>
        <span className="mb-[13px] ml-[14px] h-[17px] w-[2px] bg-[#39435a]" />
        <button aria-label="New tab" className="mb-[13px] ml-2"><Plus className="size-[18px]" strokeWidth={2.2} /></button>
        <div className="ml-auto flex h-11 items-center gap-[34px] pr-[17px] text-white">
          <button aria-label="Minimize window"><Minus className="size-[16px]" strokeWidth={1.4} /></button>
          <button aria-label="Restore window" className="px-[2px]"><RestoreIcon /></button>
          <button aria-label="Close window"><X className="size-[18px]" strokeWidth={1.4} /></button>
        </div>
      </div>
      <div className="flex h-[52px] shrink-0 items-center border-b border-[#4a4f5a] bg-[#333b4c] pl-[15px] text-[#c3cbdb]">
        <button aria-label="Back"><ArrowLeft className="size-[19px]" /></button>
        <button aria-label="Forward" className="ml-[21px] text-[#7d8597]"><ArrowRight className="size-[19px]" /></button>
        <button aria-label="Reload" className="ml-[21px]"><RotateCw className="size-[18px]" /></button>
        <div className="ml-[20px] flex h-[37px] min-w-0 flex-1 items-center rounded-full bg-[#1e2638] pr-[17px] pl-[6px]">
          <span className="flex size-[26px] items-center justify-center rounded-full bg-[#333b4c]"><SiteIcon /></span>
          <input aria-label="Address" defaultValue="chatgpt.com/c/6847cfc4-b17c-8004-a983-cec383201370" className="ml-[9px] min-w-0 flex-1 bg-transparent text-[15px] text-[#d3d8e2] outline-none" />
          <MdZoomOut className="mr-[16px] size-[19px]" />
          <MdStarBorder className="size-5" />
        </div>
        <MdOutlineExtension className="ml-[20px] size-5" />
        <span className="ml-[17px] h-[17px] w-[2px] bg-[#4c5569]" />
        <span className="ml-[18px] flex size-[23px] items-center justify-center rounded-full bg-[#689f38] text-[12px] text-white">P</span>
        <button aria-label="Browser menu" className="mr-[15px] ml-[17px]"><MdMoreVert className="size-[21px]" /></button>
      </div>

      <div className="flex min-h-0 flex-1">
        <ChatSidebar />
        <main className="relative flex min-w-0 flex-1 flex-col">
          <div className="absolute inset-x-0 top-0 flex h-[52px] items-center justify-between pr-[13px] pl-[18px]">
            <button className="flex items-center gap-[6px] text-[17px]">ChatGPT<ChevronDown className="size-[13px] text-[#a3a3a3]" /></button>
            <div className="flex items-center text-[13px] font-semibold">
              <button className="flex h-9 w-[85px] items-center justify-center gap-[7px] rounded-full border border-[#404040]"><Upload className="size-4" />Share</button>
              <button aria-label="More" className="ml-[17px]"><Ellipsis className="size-[18px]" strokeWidth={2.4} /></button>
              <span className="ml-[14px] flex size-7 items-center justify-center rounded-full bg-[#3399ff] text-[12px] font-semibold text-white">PW</span>
            </div>
          </div>
          <div className="min-h-0 flex-1 overflow-hidden">
            <div className="mx-auto w-full max-w-[763px]"><Answer /></div>
          </div>
          <Composer />
          <div className="absolute top-1 right-[2px] bottom-[114px] flex w-[10px] flex-col items-center">
            <Tri dir="up" />
            <span className="flex-[562]" />
            <span className="w-[9px] flex-[105] rounded-full bg-[#424242]" />
            <span className="flex-[126]" />
            <Tri dir="down" />
          </div>
        </main>
      </div>
      <Taskbar />
    </section>
  );
}

export default function App() {
  return (
    <div className="flex h-screen bg-black font-['Noto_Sans','Open_Sans',sans-serif]">
      <Assistant />
      <Browser />
    </div>
  );
}
